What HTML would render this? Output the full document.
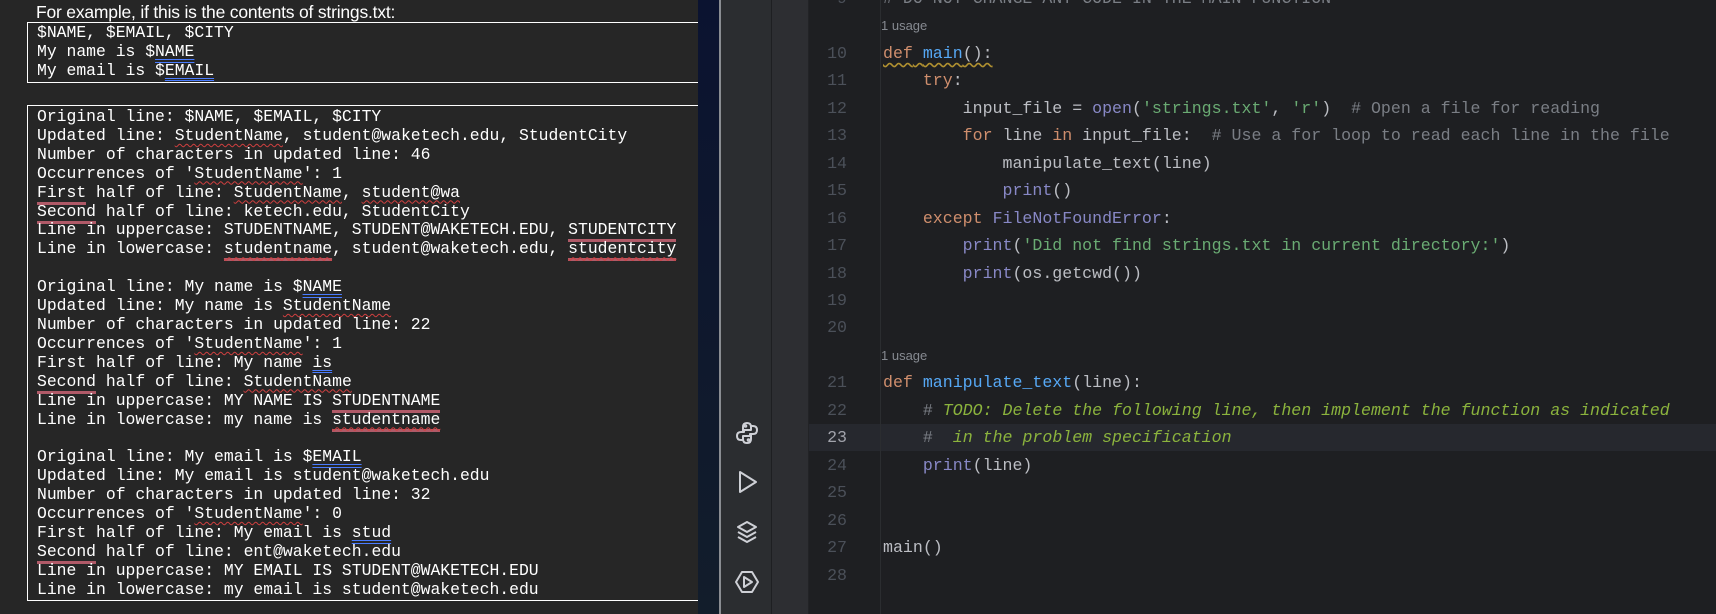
<!DOCTYPE html>
<html><head><meta charset="utf-8"><style>
body{margin:0;width:1716px;height:614px;overflow:hidden;background:#1e1f22;position:relative;font-family:"Liberation Mono",monospace}
#left{position:absolute;left:0;top:0;width:698px;height:614px;background:#262626}
#title{position:absolute;left:36px;top:2px;font:17.5px "Liberation Sans",sans-serif;color:#fff;letter-spacing:-0.2px}
.box{position:absolute;left:27px;width:680px;border:1.5px solid #fff;border-right:none;box-sizing:border-box}
.box pre{margin:0;position:absolute;left:9px;font:16.4px/18.9px "Liberation Mono",monospace;color:#fff}
.w{text-decoration:underline wavy #d04040;text-decoration-thickness:1px;text-underline-offset:3px}
.b{text-decoration:underline double #4a7cff;text-underline-offset:3px}
.r{border-bottom:3px solid #b05a68}
#navy{position:absolute;left:698px;top:0;width:21px;height:614px;background:linear-gradient(#0b1330,#121d2b)}
#sep{position:absolute;left:719px;top:0;width:1.5px;height:614px;background:#8a8d92}
#side{position:absolute;left:721px;top:0;width:50px;height:614px;background:#2b2d30}
#gut2{position:absolute;left:771px;top:0;width:1px;height:614px;background:#1e1f22}
#gut3{position:absolute;left:772px;top:0;width:36px;height:614px;background:#2d2e32}
#gut4{position:absolute;left:808px;top:0;width:1px;height:614px;background:#222326}
#ed{position:absolute;left:809px;top:0;width:907px;height:614px;background:#1e1f22}
#cl{position:absolute;left:880px;top:0;width:1px;height:614px;background:#2b2d30}
.hl{position:absolute;left:809px;top:424px;width:907px;height:27px;background:#26282e}
.row{position:absolute;height:27px;line-height:27px;font-size:16.6px;white-space:pre;color:#bcbec4}
.n{left:809px;width:38px;text-align:right;color:#4b5059}
.c{left:883px}
.k{color:#cf8e6d}.f{color:#56a8f5}.p{color:#8888c6}.s{color:#6aab73}.cm{color:#7a7e85}.t{color:#8bb33d;font-style:italic}
.u{font:13px "Liberation Sans",sans-serif;color:#868a91}
svg{position:absolute}
</style></head><body>
<div id="left">
<div id="title">For example, if this is the contents of strings.txt:</div>
<div class="box" style="top:22px;height:61px"><pre style="top:1px">$NAME, $EMAIL, $CITY
My name is $<span class="b">NAME</span>
My email is $<span class="b">EMAIL</span></pre></div>
<div class="box" style="top:105px;height:496px"><pre style="top:2px">Original line: $NAME, $EMAIL, $CITY
Updated line: <span class="w">StudentName</span>, student@waketech.edu, StudentCity
Number of characters in updated line: 46
Occurrences of '<span class="w">StudentName</span>': 1
<span class="r">First</span> half of line: <span class="w">StudentName</span>, <span class="w">student@wa</span>
<span class="r">Second</span> half of line: ketech.edu, StudentCity
Line in uppercase: STUDENTNAME, STUDENT@WAKETECH.EDU, <span class="r">STUDENTCITY</span>
Line in lowercase: <span class="w r">studentname</span>, student@waketech.edu, <span class="w r">studentcity</span>

Original line: My name is $<span class="b">NAME</span>
Updated line: My name is <span class="w">StudentName</span>
Number of characters in updated line: 22
Occurrences of '<span class="w">StudentName</span>': 1
First half of line: My name <span class="b">is</span>
<span class="r">Second</span> half of line: <span class="w">StudentName</span>
Line in uppercase: MY NAME IS <span class="r">STUDENTNAME</span>
Line in lowercase: my name is <span class="w r">studentname</span>

Original line: My email is $<span class="b">EMAIL</span>
Updated line: My email is student@waketech.edu
Number of characters in updated line: 32
Occurrences of '<span class="w">StudentName</span>': 0
First half of line: My email is <span class="b">stud</span>
<span class="r">Second</span> half of line: ent@waketech.edu
Line in uppercase: MY EMAIL IS STUDENT@WAKETECH.EDU
Line in lowercase: my email is student@waketech.edu</pre></div>
</div>
<div id="navy"></div><div id="sep"></div><div id="side"></div><div id="gut2"></div><div id="gut3"></div><div id="gut4"></div>
<div id="ed"></div><div class="hl"></div><div id="cl"></div>

<svg style="left:733px;top:419px" width="28" height="28" viewBox="0 0 28 28" fill="none" stroke="#ced0d6" stroke-width="2" stroke-linejoin="round"><path d="M10 13V8q0-4 4-4t4 4v3h-7v2h-3q-4 0-4 4t4 4h2"/><path d="M18 15v5q0 4-4 4t-4-4v-3h7v-2h3q4 0 4-4t-4-4h-2"/><circle cx="12.5" cy="7" r="0.8"/><circle cx="15.5" cy="21" r="0.8"/></svg>
<svg style="left:735px;top:468px" width="26" height="28" viewBox="0 0 26 28" fill="none" stroke="#ced0d6" stroke-width="2" stroke-linejoin="round"><path d="M5 4v20l16-10z"/></svg>
<svg style="left:733px;top:519px" width="28" height="28" viewBox="0 0 28 28" fill="none" stroke="#ced0d6" stroke-width="2" stroke-linejoin="round"><path d="M14 3l9 5-9 5-9-5z"/><path d="M5 13l9 5 9-5"/><path d="M5 18l9 5 9-5"/></svg>
<svg style="left:733px;top:568px" width="28" height="28" viewBox="0 0 28 28" fill="none" stroke="#ced0d6" stroke-width="2" stroke-linejoin="round"><path d="M9 4h10l6 10-6 10H9L3 14z"/><path d="M11 9v10l8-5z"/></svg>

<div class="row n" style="top:-15px">9</div><div class="row c cm" style="top:-15px"># DO NOT CHANGE ANY CODE IN THE MAIN FUNCTION</div>
<div class="row c u" style="top:18px;left:881px">1 usage</div>
<div class="row n" style="top:40px">10</div><div class="row c" style="top:40px"><span style="text-decoration:underline wavy #b09030;text-underline-offset:4px"><span class="k">def</span> <span class="f">main</span>():</span></div>
<div class="row n" style="top:67px">11</div><div class="row c" style="top:67px">    <span class="k">try</span>:</div>
<div class="row n" style="top:95px">12</div><div class="row c" style="top:95px">        input_file = <span class="p">open</span>(<span class="s">'strings.txt'</span>, <span class="s">'r'</span>)  <span class="cm"># Open a file for reading</span></div>
<div class="row n" style="top:122px">13</div><div class="row c" style="top:122px">        <span class="k">for</span> line <span class="k">in</span> input_file:  <span class="cm"># Use a for loop to read each line in the file</span></div>
<div class="row n" style="top:150px">14</div><div class="row c" style="top:150px">            manipulate_text(line)</div>
<div class="row n" style="top:177px">15</div><div class="row c" style="top:177px">            <span class="p">print</span>()</div>
<div class="row n" style="top:205px">16</div><div class="row c" style="top:205px">    <span class="k">except</span> <span class="p">FileNotFoundError</span>:</div>
<div class="row n" style="top:232px">17</div><div class="row c" style="top:232px">        <span class="p">print</span>(<span class="s">'Did not find strings.txt in current directory:'</span>)</div>
<div class="row n" style="top:260px">18</div><div class="row c" style="top:260px">        <span class="p">print</span>(os.getcwd())</div>
<div class="row n" style="top:287px">19</div>
<div class="row n" style="top:314px">20</div>
<div class="row c u" style="top:348px;left:881px">1 usage</div>
<div class="row n" style="top:369px">21</div><div class="row c" style="top:369px"><span class="k">def</span> <span class="f">manipulate_text</span>(line):</div>
<div class="row n" style="top:397px">22</div><div class="row c" style="top:397px">    <span class="cm">#</span> <span class="t">TODO: Delete the following line, then implement the function as indicated</span></div>
<div class="row n" style="top:424px;color:#a1a3ab">23</div><div class="row c" style="top:424px">    <span class="cm">#</span>  <span class="t">in the problem specification</span></div>
<div class="row n" style="top:452px">24</div><div class="row c" style="top:452px">    <span class="p">print</span>(line)</div>
<div class="row n" style="top:479px">25</div>
<div class="row n" style="top:507px">26</div>
<div class="row n" style="top:534px">27</div><div class="row c" style="top:534px">main()</div>
<div class="row n" style="top:562px">28</div>
</body></html>
